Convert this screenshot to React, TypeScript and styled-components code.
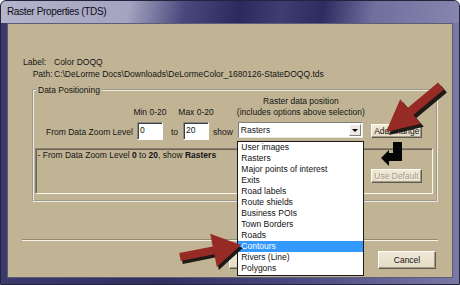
import React from "react";
import styled, { createGlobalStyle } from "styled-components";

const GlobalStyle = createGlobalStyle`
  html, body {
    margin: 0;
    padding: 0;
    background: #ffffff;
  }
  body {
    font-family: "Liberation Sans", Arial, sans-serif;
    color: #111;
  }
`;

const Window = styled.div`
  position: relative;
  width: 460px;
  height: 285px;
  box-sizing: border-box;
  display: flex;
  flex-direction: column;
  border: 1px solid #24233c;
  border-radius: 6px 6px 0 0;
  overflow: hidden;
  background: linear-gradient(
    90deg,
    #3b3a6d 0%,
    #302f60 35%,
    #4a4980 65%,
    #7a79a5 100%
  );
`;

const TitleBar = styled.div`
  height: 22px;
  flex: none;
  padding-left: 6px;
  font-size: 10px;
  line-height: 22px;
  letter-spacing: -0.35px;
  color: #0c0c14;
  background: linear-gradient(
    100deg,
    #b5b4cb 0%,
    #a4a3c0 28%,
    #4a497e 40%,
    #2b2a5f 52%,
    #3e3d72 61%,
    #2d2c61 70%,
    #706f9d 81%,
    #8786af 100%
  );
`;

const Client = styled.div`
  flex: 1;
  margin: 0 6px 6px;
  border: 1px solid #5e5d78;
  background: #c1b494;
  padding: 32px 16px 0 0;
  font-size: 8.5px;
  line-height: 11px;
  color: #141414;
`;

const InfoGrid = styled.div`
  display: grid;
  grid-template-columns: 29.5px auto;
  justify-content: start;
  column-gap: 1.5px;
  margin-left: 15px;
  line-height: 12px;
`;

const InfoKey = styled.span<{ $align: "start" | "end" }>`
  justify-self: ${(p) => p.$align};
`;

const GroupBox = styled.fieldset`
  margin: 5px 0 0 24px;
  width: 406px;
  box-sizing: border-box;
  min-inline-size: 0;
  border: 2px groove #f1ebdd;
  padding: 1px 3px 6px 1px;
`;

const GroupLegend = styled.legend`
  padding: 0 2px;
  margin-left: 1px;
  line-height: 10px;
  font-size: 8.5px;
`;

const ZoomGrid = styled.div`
  display: grid;
  grid-template-columns: auto 26px auto 26px auto 125px 55px;
  grid-template-rows: 11px 15px 18px;
  justify-content: start;
  column-gap: 4px;
  margin-left: 11px;
  align-items: start;
`;

const Heading = styled.span<{ $col: number; $row: number }>`
  grid-column: ${(p) => p.$col};
  grid-row: ${(p) => p.$row};
  justify-self: center;
  white-space: nowrap;
`;

const FieldLabel = styled.span<{ $padLeft?: number; $padRight?: number }>`
  grid-row: 3;
  padding-top: 5px;
  padding-left: ${(p) => p.$padLeft ?? 0}px;
  padding-right: ${(p) => p.$padRight ?? 0}px;
  white-space: nowrap;
`;

const TextField = styled.div`
  grid-row: 3;
  height: 18px;
  box-sizing: border-box;
  display: flex;
  align-items: center;
  padding: 0 0 2px 2px;
  background: #fff;
  border: 1px solid;
  border-color: #8a8a8a #ffffff #ffffff #8a8a8a;
  box-shadow: inset 1px 1px 0 #404040;
`;

const ComboWrap = styled.div`
  grid-row: 3;
  position: relative;
  height: 16px;
`;

const ComboBox = styled.div`
  height: 16px;
  box-sizing: border-box;
  display: flex;
  align-items: center;
  justify-content: space-between;
  padding: 0 1px 0 1.5px;
  background: #fff;
  border: 1px solid;
  border-color: #7d7d7d #e8e8e8 #e8e8e8 #7d7d7d;
`;

const DropButton = styled.span`
  width: 12px;
  height: 12px;
  box-sizing: border-box;
  display: flex;
  align-items: center;
  justify-content: center;
  background: #eeebe4;
  border: 1px solid;
  border-color: #ffffff #808080 #808080 #ffffff;

  &::after {
    content: "";
    border-left: 3px solid transparent;
    border-right: 3px solid transparent;
    border-top: 3px solid #000;
    margin-top: 1px;
  }
`;

const DropList = styled.ul`
  position: absolute;
  z-index: 2;
  top: calc(100% + 3px);
  left: -1px;
  width: 127px;
  box-sizing: border-box;
  margin: 0;
  padding: 0 0 1px;
  list-style: none;
  background: #fff;
  border: 1px solid #1a1a1a;
`;

const DropItem = styled.li<{ $selected?: boolean }>`
  height: 11px;
  line-height: 11px;
  padding-left: 3px;
  white-space: nowrap;
  color: ${(p) => (p.$selected ? "#ffffff" : "#111")};
  background: ${(p) => (p.$selected ? "#3399ff" : "transparent")};
`;

const DialogButton = styled.button<{ $w: number; $h: number; $off?: boolean }>`
  width: ${(p) => p.$w}px;
  height: ${(p) => p.$h}px;
  box-sizing: border-box;
  padding: 0;
  font-family: inherit;
  font-size: 8.5px;
  line-height: 10px;
  text-align: center;
  white-space: nowrap;
  color: ${(p) => (p.$off ? "#a39b86" : "#141414")};
  text-shadow: ${(p) => (p.$off ? "1px 1px 0 #fbf8f0" : "none")};
  background: linear-gradient(#f0e9d7, #e4dbc5);
  border: 1px solid;
  border-color: #fffdf6 #5f5b50 #5f5b50 #fffdf6;
  box-shadow: inset -1px -1px 0 #a59d88;
`;

const AddButton = styled(DialogButton)`
  grid-row: 3;
  justify-self: end;
  margin-top: 2px;
`;

const StatusBox = styled.div`
  margin-top: 8px;
  height: 46px;
  box-sizing: border-box;
  display: flex;
  justify-content: space-between;
  align-items: flex-start;
  padding: 1px 10px 0 1.5px;
  border: 1px solid;
  border-color: #8b836f #fbf8f0 #fbf8f0 #8b836f;
  box-shadow: inset 1px 1px 0 #6a6454;
`;

const StatusButton = styled(DialogButton)`
  margin-top: 19px;
`;

const Separator = styled.div`
  margin: 37px 0 0 14px;
  width: 416px;
  border-top: 1px solid #938a74;
  border-bottom: 1px solid #f7f3ea;
`;

const ButtonRow = styled.div`
  display: flex;
  justify-content: flex-end;
  gap: 91px;
  margin-top: 10px;
`;

const Overlay = styled.svg`
  position: absolute;
  top: -1px;
  left: -1px;
  width: 460px;
  height: 285px;
  z-index: 3;
  pointer-events: none;
`;

const layers = [
  "User images",
  "Rasters",
  "Major points of interest",
  "Exits",
  "Road labels",
  "Route shields",
  "Business POIs",
  "Town Borders",
  "Roads",
  "Contours",
  "Rivers (Line)",
  "Polygons",
];

const upperArrow =
  "438.1,82.5 407.6,108 400.2,99.2 386,132 420.8,123.8 413.4,115 443.9,89.5";
const lowerArrow =
  "179.2,253.1 212.7,246.5 210.2,233.7 241,245 216.8,267.1 214.3,254.3 180.8,260.9";

const Annotations = () => (
  <Overlay viewBox="0 0 460 285">
    <polygon points={upperArrow} fill="#1d1a17" transform="translate(3 3)" />
    <polygon points={upperArrow} fill="#962a24" />
    <polygon points={lowerArrow} fill="#1d1a17" transform="translate(2 3)" />
    <polygon points={lowerArrow} fill="#962a24" />
    <path
      d="M393 142 H402 V161 H389 V166 L381 158 L389 150 V153 H393 Z"
      fill="#050505"
    />
  </Overlay>
);

export default function App() {
  return (
    <>
      <GlobalStyle />
      <Window>
        <TitleBar>Raster Properties (TDS)</TitleBar>
        <Client>
          <InfoGrid>
            <InfoKey $align="start">Label:</InfoKey>
            <span>Color DOQQ</span>
            <InfoKey $align="end">Path:</InfoKey>
            <span>C:\DeLorme Docs\Downloads\DeLormeColor_1680126-StateDOQQ.tds</span>
          </InfoGrid>

          <GroupBox>
            <GroupLegend>Data Positioning</GroupLegend>
            <ZoomGrid>
              <Heading $col={6} $row={1}>Raster data position</Heading>
              <Heading $col={2} $row={2}>Min 0-20</Heading>
              <Heading $col={4} $row={2}>Max 0-20</Heading>
              <Heading $col={6} $row={2}>(includes options above selection)</Heading>

              <FieldLabel>From Data Zoom Level</FieldLabel>
              <TextField>0</TextField>
              <FieldLabel $padLeft={4} $padRight={1}>to</FieldLabel>
              <TextField>20</TextField>
              <FieldLabel $padRight={1.5}>show</FieldLabel>
              <ComboWrap>
                <ComboBox>
                  <span>Rasters</span>
                  <DropButton />
                </ComboBox>
                <DropList>
                  {layers.map((name) => (
                    <DropItem key={name} $selected={name === "Contours"}>
                      {name}
                    </DropItem>
                  ))}
                </DropList>
              </ComboWrap>
              <AddButton $w={51} $h={14}>Add/change</AddButton>
            </ZoomGrid>

            <StatusBox>
              <span>
                - From Data Zoom Level <b>0</b> to <b>20</b>, show <b>Rasters</b>
              </span>
              <StatusButton $w={51} $h={14} $off>
                Use Default
              </StatusButton>
            </StatusBox>
          </GroupBox>

          <Separator />
          <ButtonRow>
            <DialogButton $w={58} $h={18} aria-label="OK" />
            <DialogButton $w={58} $h={18}>Cancel</DialogButton>
          </ButtonRow>
        </Client>
        <Annotations />
      </Window>
    </>
  );
}
